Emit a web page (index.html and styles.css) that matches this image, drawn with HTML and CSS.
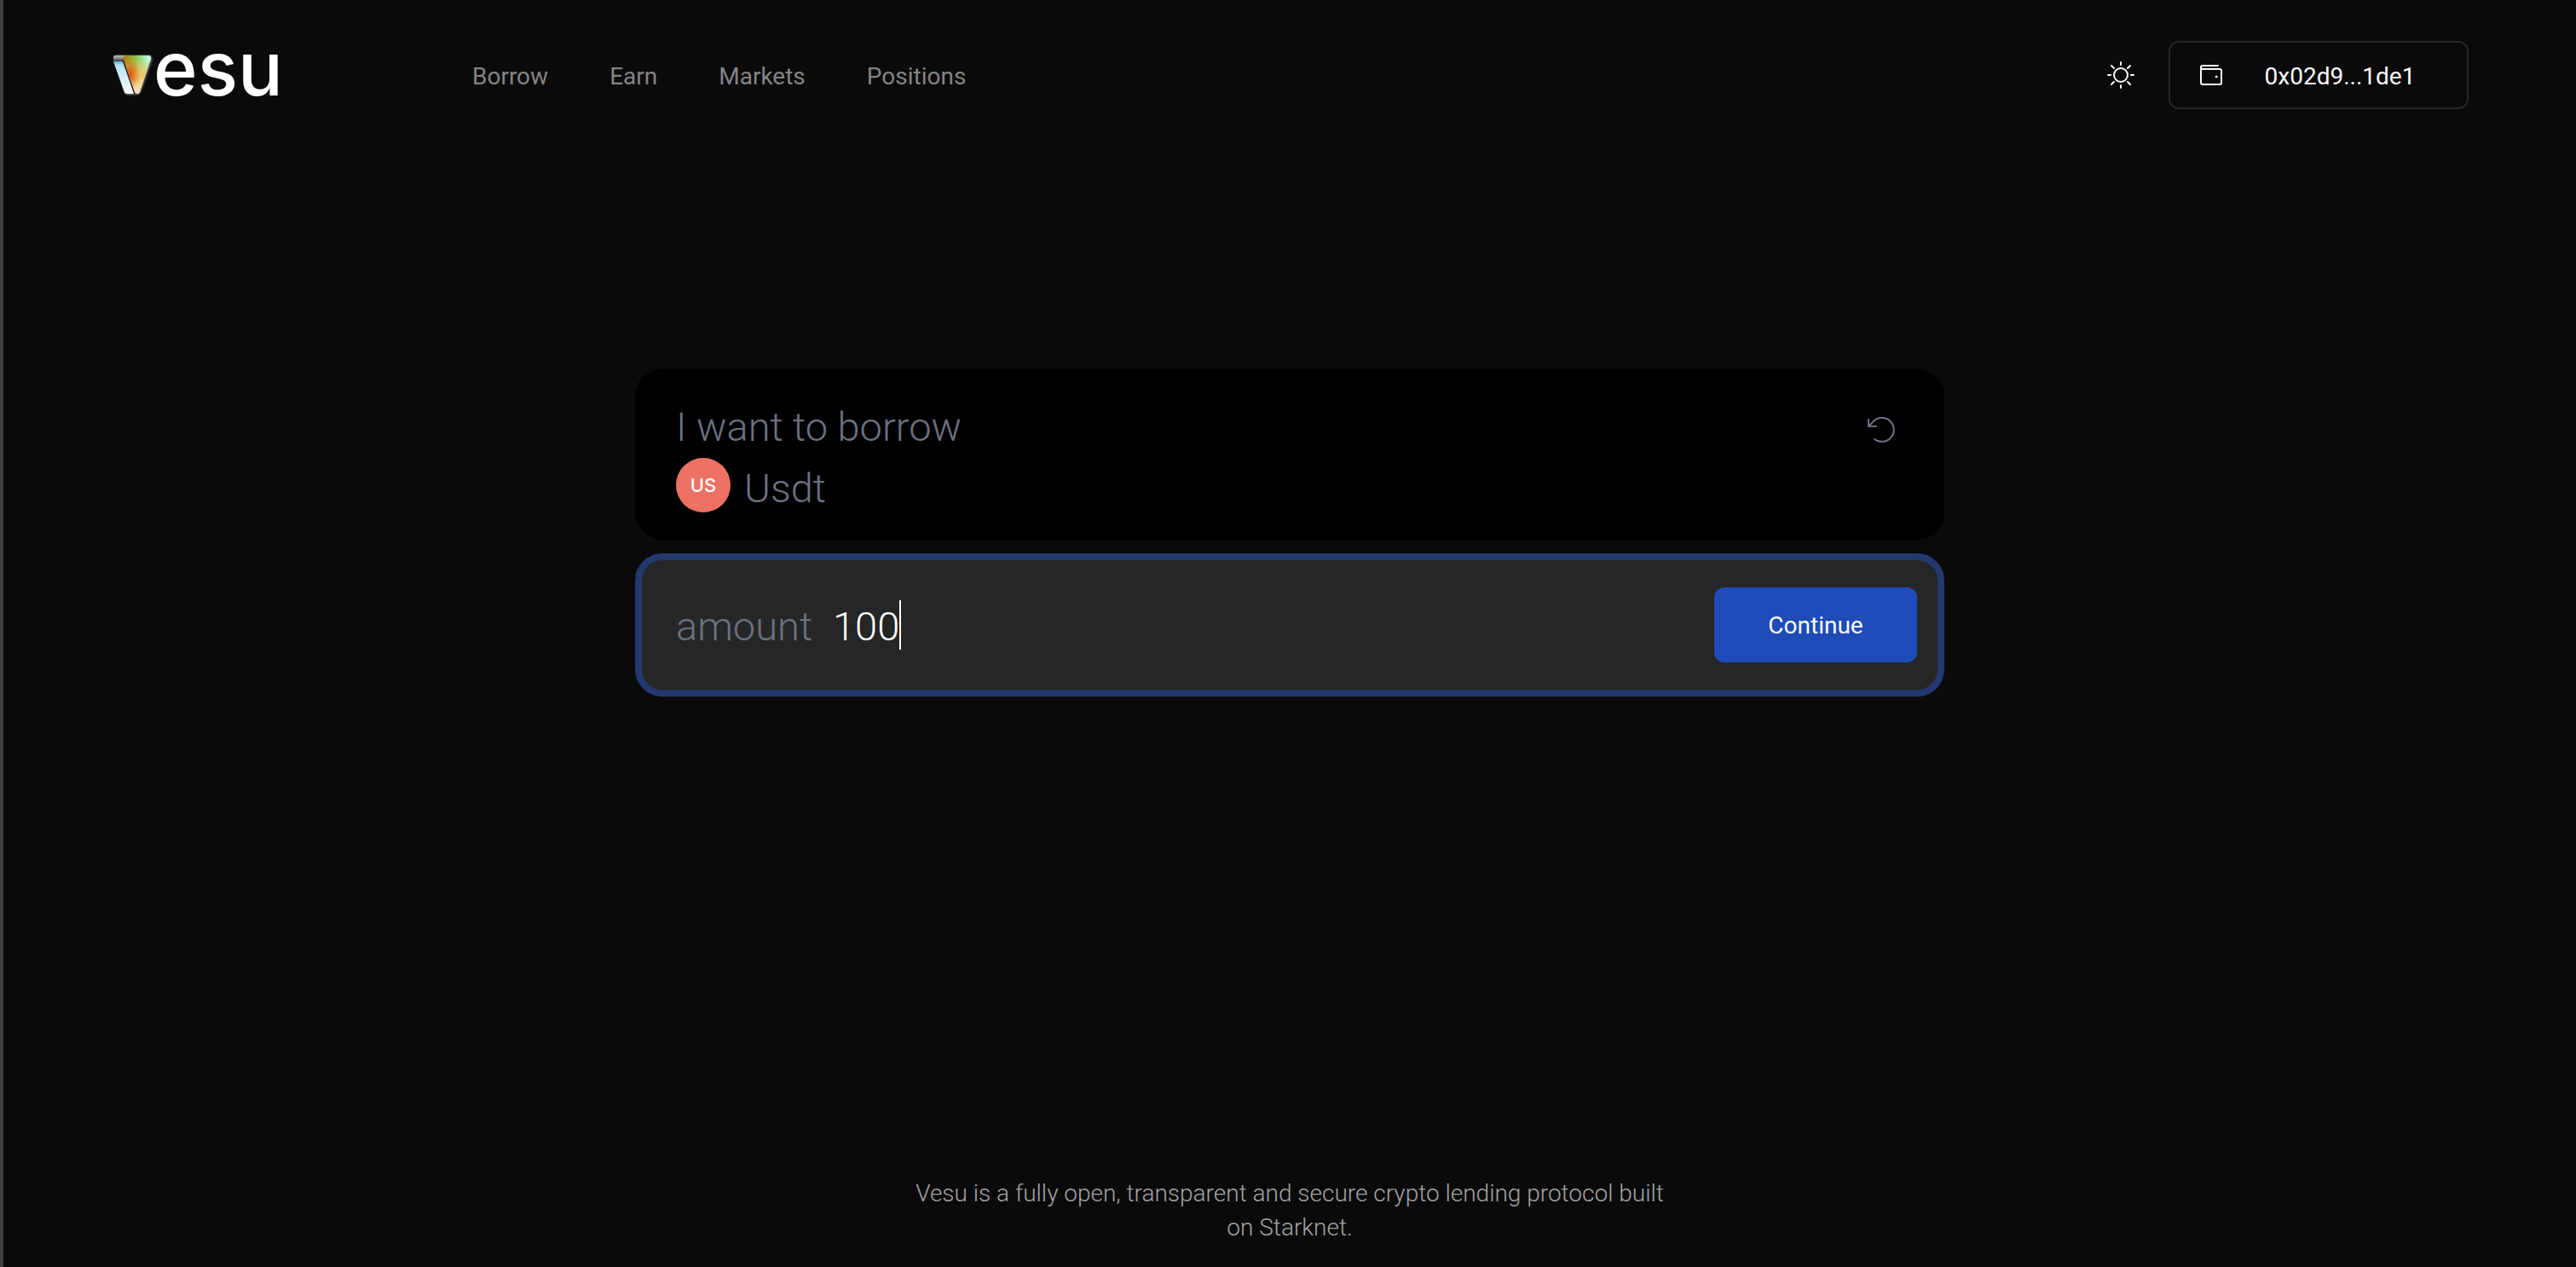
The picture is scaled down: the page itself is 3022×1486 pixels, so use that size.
FILE: index.html
```html
<!DOCTYPE html>
<html lang="en">
<head>
<meta charset="utf-8">
<title>Vesu</title>
<meta name="viewport" content="width=device-width, initial-scale=1">
<link rel="stylesheet" href="styles.css">
</head>
<body>
<header class="header">
  <a class="logo" href="#" aria-label="Vesu">
    <svg class="logo-mark" viewBox="0 0 48 50" aria-hidden="true">
      <defs>
        <linearGradient id="side" x1="0" y1="0" x2="0" y2="1">
          <stop offset="0" stop-color="#4fb9d6"/><stop offset=".12" stop-color="#b5e2f0"/><stop offset="1" stop-color="#fff"/>
        </linearGradient>
        <linearGradient id="cap" x1="0" y1="0" x2="0" y2="1">
          <stop offset="0" stop-color="#bbb"/><stop offset=".5" stop-color="#888"/><stop offset="1" stop-color="#333"/>
        </linearGradient>
        <linearGradient id="face" x1="0" y1="0" x2="1" y2="0">
          <stop offset="0" stop-color="#b8740f"/><stop offset=".45" stop-color="#8fc244"/><stop offset=".8" stop-color="#a9f0c0"/><stop offset="1" stop-color="#dcfff4"/>
        </linearGradient>
        <linearGradient id="warm" x1="0" y1="0" x2="0" y2="1">
          <stop offset=".1" stop-color="#f3c860" stop-opacity="0"/><stop offset=".5" stop-color="#ecc468"/><stop offset="1" stop-color="#fbe3c4"/>
        </linearGradient>
        <radialGradient id="ember" cx=".22" cy=".5" r=".4">
          <stop offset="0" stop-color="#d95207"/><stop offset="1" stop-color="#d95207" stop-opacity="0"/>
        </radialGradient>
        <filter id="glow" x="-20%" y="-20%" width="140%" height="140%"><feGaussianBlur stdDeviation="1"/></filter>
      </defs>
      <path d="M3 2H44Q47 4 46 8L33 45Q31 48 28 48H17Q15 48 14 45L2 8Z" fill="#fff" opacity=".45" filter="url(#glow)"/>
      <path d="M3 2H15L14 9H1V4Q1 2 3 2Z" fill="url(#cap)"/>
      <path d="M1 9H12L26 47H17Q15 47 14 45Z" fill="url(#side)"/>
      <path d="M12 9L14 3L29 47H25Z" fill="#222"/>
      <path d="M16 2H42Q46 2 45 6L32 45Q31 47 29 47Q27 47 26 45L13 7Q12 2 16 2Z" fill="url(#face)"/>
      <path d="M16 2H42Q46 2 45 6L32 45Q31 47 29 47Q27 47 26 45L13 7Q12 2 16 2Z" fill="url(#warm)"/>
      <path d="M16 2H42Q46 2 45 6L32 45Q31 47 29 47Q27 47 26 45L13 7Q12 2 16 2Z" fill="url(#ember)"/>
    </svg>
    <span class="logo-text">esu</span>
  </a>
  <nav class="nav">
    <a href="#">Borrow</a>
    <a href="#">Earn</a>
    <a href="#">Markets</a>
    <a href="#">Positions</a>
  </nav>
  <button class="theme" type="button" aria-label="Toggle theme">
    <svg viewBox="0 0 32 32" aria-hidden="true"><circle cx="16" cy="16" r="8"/><path d="M16 1V4M16 28V31M1 16H4M28 16H31M5 5L8 8M24 24L27 27M5 27L8 24M24 8L27 5"/></svg>
  </button>
  <button class="wallet" type="button">
    <svg viewBox="0 0 28 28" aria-hidden="true"><path d="M22 3H4Q2 3 2 5V23Q2 25 4 25H24Q26 25 26 23V9Q26 7 24 7H4Q2 7 2 5"/><circle class="dot" cx="20" cy="16" r="1"/></svg>
    <span class="address">0x02d9...1de1</span>
  </button>
</header>
<main class="main">
  <section class="card summary">
    <div class="choice">
      <p class="line">I want to borrow</p>
      <p class="token"><span class="avatar">US</span>Usdt</p>
    </div>
    <button class="reset" type="button" aria-label="Reset">
      <svg viewBox="0 0 36 36" aria-hidden="true"><path d="M3 5V13H12M3 13L9 7A14 14 0 1 1 10 28"/></svg>
    </button>
  </section>
  <form class="card entry">
    <label class="line" for="amount">amount</label>
    <div class="field">
      <input id="amount" class="amount" type="text" inputmode="decimal" value="100" autocomplete="off">
      <span class="caret"></span>
    </div>
    <button class="continue" type="button">Continue</button>
  </form>
</main>
<footer class="footer"><p>Vesu is a fully open, transparent and secure crypto lending protocol built on Starknet.</p></footer>
</body>
</html>
```
FILE: styles.css
```css
* { box-sizing: border-box; }
body {
  margin: 0;
  min-height: 100vh;
  display: flex;
  flex-direction: column;
  background: #0a0a0a;
  border-left: 4px solid #404040;
  color: #fafafa;
  font: 400 28px/40px Roboto, "Liberation Sans", sans-serif;
}
p { margin: 0; }
a { color: inherit; text-decoration: none; }
button {
  font: inherit;
  color: inherit;
  background: none;
  border: 0;
  padding: 0;
  cursor: pointer;
}
svg { display: block; fill: none; stroke-linecap: round; stroke-linejoin: round; }

.header {
  display: flex;
  align-items: center;
  height: 176px;
  padding: 0 126px 0 128px;
}
.logo { display: flex; align-items: center; width: 422px; }
.logo-mark { width: 48px; height: 50px; }
.logo-text { font: 500 88px/64px Inter, sans-serif; color: #fff; padding-bottom: 16px; }
.nav { display: flex; gap: 72px; flex: 1; padding-top: 4px; color: #848484; }
.theme { margin-right: 40px; }
.theme svg { width: 32px; height: 32px; stroke: #fafafa; stroke-width: 2; }
.wallet {
  display: flex;
  align-items: center;
  width: 352px;
  height: 80px;
  padding: 0 36px 0 34px;
  border: 2px solid #262626;
  border-radius: 12px;
}
.wallet svg { width: 28px; height: 28px; stroke: #fafafa; stroke-width: 2; }
.wallet .dot { fill: #fafafa; stroke-width: 1; }
.address { flex: 1; padding: 4px 0 0 24px; text-align: center; }

.main {
  flex: 1;
  width: 100%;
  max-width: 1536px;
  margin: 0 auto;
  padding-top: 257px;
  display: flex;
  flex-direction: column;
  gap: 16px;
}
.card { border-radius: 32px; font-size: 47px; line-height: 72px; font-weight: 300; }
.line, .token { color: #6b7280; }
.summary {
  display: flex;
  justify-content: space-between;
  align-items: flex-start;
  height: 200px;
  padding: 32px 56px 24px 48px;
  background: #000;
}
.token { display: flex; align-items: flex-start; gap: 16px; }
.avatar {
  display: grid;
  place-items: center;
  width: 64px;
  height: 64px;
  border-radius: 50%;
  background: #ed7264;
  color: #fff;
  font: 500 22px/32px Inter, sans-serif;
}
.reset { padding-top: 22px; }
.reset svg { width: 36px; height: 36px; stroke: #6b7280; stroke-width: 2; }
.entry {
  display: flex;
  align-items: center;
  gap: 24px;
  height: 168px;
  padding: 0 24px 0 40px;
  border: 8px solid #23386e;
  background: #262626;
}
.entry .line, .amount { padding: 4px 0 0; }
.field { display: flex; align-items: center; flex: 1; }
.amount {
  field-sizing: content;
  border: 0;
  outline: 0;
  background: none;
  color: #fff;
  font: inherit;
}
.caret { width: 2px; height: 58px; background: #fff; }
.continue {
  width: 238px;
  height: 88px;
  padding-top: 2px;
  border-radius: 12px;
  background: #1e4bb8;
  font-size: 28px;
  line-height: 40px;
  font-weight: 400;
}
.footer { padding: 0 24px 26px; color: #a3a3a3; font-weight: 300; text-align: center; }
.footer p { max-width: 896px; margin: 0 auto; }
```
